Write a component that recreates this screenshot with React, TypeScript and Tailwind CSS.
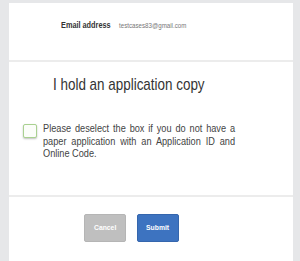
export default function App() {
  return (
    <div className="w-[300px] h-[261px] bg-[#e6e7e9] pl-[9px] pr-[7px] pt-[3px] overflow-hidden">
      <div className="h-full bg-white flex flex-col" style={{ fontFamily: '"Liberation Sans", Arial, sans-serif' }}>
        {/* Email row */}
        <div className="h-[59px] pt-[16px] pl-[52px] border-b-2 border-[#ececec]">
          <div className="flex items-baseline gap-[11px] origin-left scale-x-[0.77]">
            <span className="text-[9.5px] font-bold text-[#333] leading-[12px]">Email address</span>
            <span className="text-[8px] text-[#777] leading-[12px]">testcases83@gmail.com</span>
          </div>
        </div>

        {/* Application copy */}
        <div className="h-[135px] border-b-2 border-[#ececec] flex flex-col">
          <h2 className="mt-[11px] ml-[44px] text-[17px] leading-[24px] text-[#333] font-normal origin-left scale-x-[0.79] whitespace-nowrap">
            I hold an application copy
          </h2>
          <div className="mt-[25px] ml-[14px] flex items-start gap-[6px]">
            <div className="mt-[2px] w-[14px] h-[14px] shrink-0 rounded-[2px] border border-[#a9d190] bg-[#fbfdf9] shadow-[0_1px_2px_rgba(0,0,0,0.25)]" />
            <p className="w-[230px] shrink-0 text-[11px] leading-[12.5px] text-[#444] text-justify origin-left scale-x-[0.835]">
              Please deselect the box if you do not have a paper application with an Application ID and Online Code.
            </p>
          </div>
        </div>

        {/* Buttons */}
        <div className="flex pl-[75px] pt-[17px] gap-[11px]">
          <button className="w-[42px] h-[28px] rounded-[2px] bg-[#bfbfbf] text-white text-[8px] font-bold border border-[#b5b5b5]">
            <span className="inline-block scale-x-[0.85]">Cancel</span>
          </button>
          <button className="w-[42px] h-[28px] rounded-[2px] bg-[#3d73c0] text-white text-[8px] font-bold border border-[#3566ad]">
            <span className="inline-block scale-x-[0.85]">Submit</span>
          </button>
        </div>
      </div>
    </div>
  );
}
